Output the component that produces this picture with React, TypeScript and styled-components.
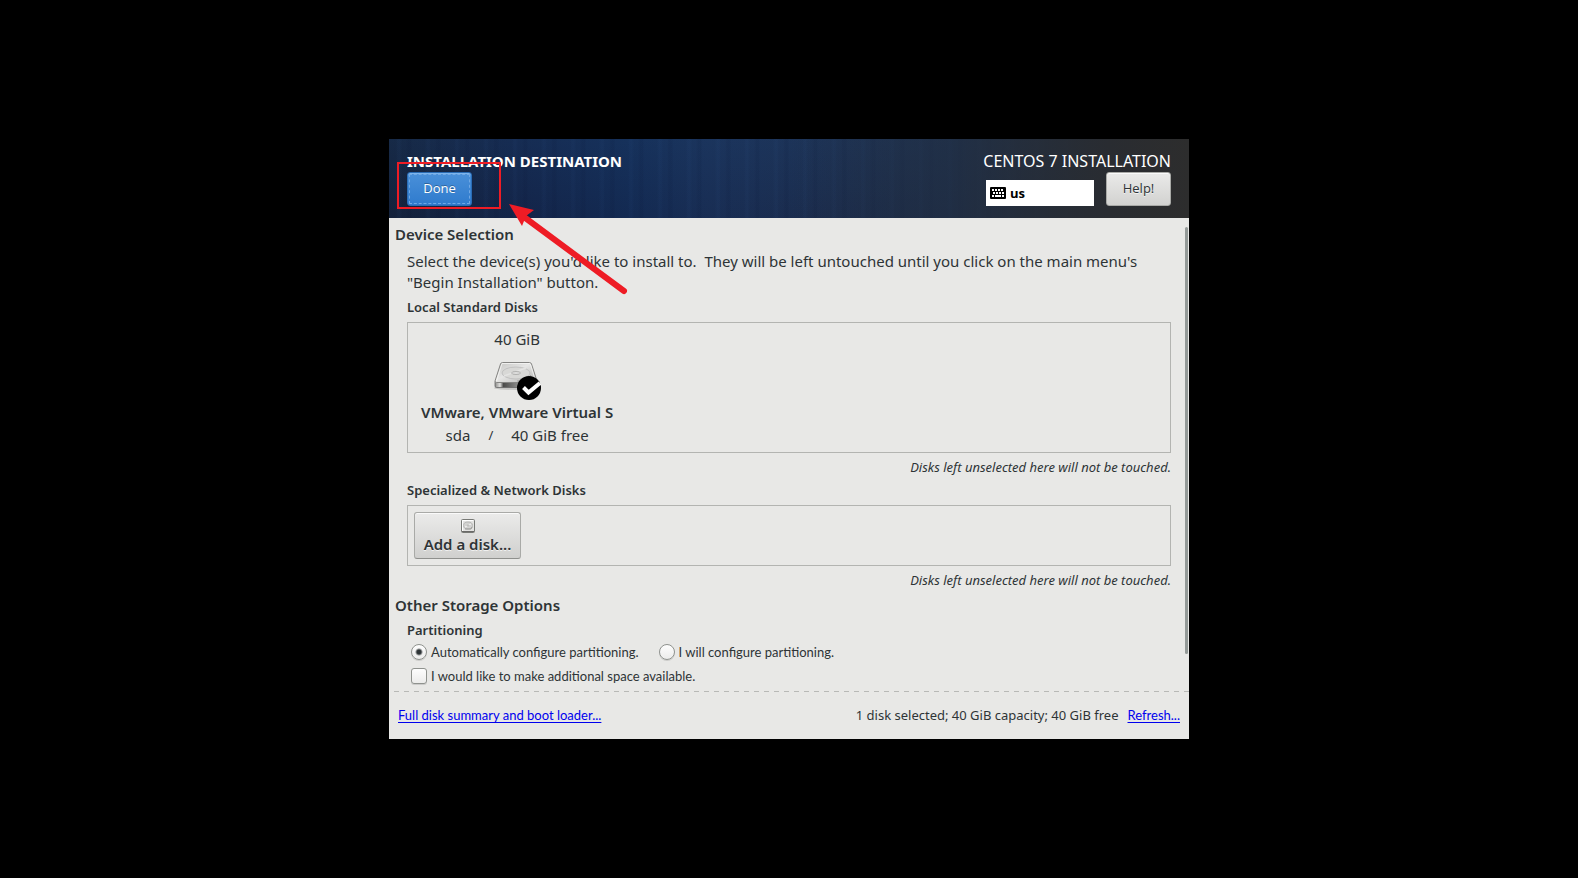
import React from "react";
import styled, { createGlobalStyle } from "styled-components";

const GlobalStyle = createGlobalStyle`
  * { box-sizing: border-box; }
  body {
    margin: 0;
    background: #000;
    color: #2e3436;
    font-family: "Noto Sans", "Open Sans", sans-serif;
    font-size: 13px;
    line-height: 18px;
  }
  button, input { font: inherit; color: inherit; margin: 0; }
  h1, h2, h3, p { margin: 0; }
`;

const controlFont = `"Open Sans", "Noto Sans", sans-serif`;
const labelFont = `Lato, "Open Sans", sans-serif`;

const Screen = styled.div`
  min-height: 100vh;
  display: flex;
  align-items: center;
  justify-content: center;
`;

const Installer = styled.main`
  position: relative;
  width: 100%;
  max-width: 800px;
  background: #e8e8e6;
`;

const Header = styled.header`
  display: flex;
  justify-content: space-between;
  padding: 12px 18px;
  color: #fff;
  background:
    linear-gradient(90deg, transparent 50%, rgba(32, 46, 68, 0.7) 70%, #292c31 90%, #2d2d2d 100%),
    repeating-linear-gradient(90deg, transparent 0 7px, rgba(70, 120, 190, 0.04) 9px 11px, transparent 13px 17px, rgba(0, 10, 40, 0.07) 19px 22px, transparent 23px 29px),
    linear-gradient(180deg, rgba(30, 70, 120, 0.2), rgba(10, 20, 60, 0.1)),
    linear-gradient(90deg, #15233b 0, #14264a 16%, #142c54 30%, #1a3056 40%, #1d2f4f 55%, #222e41 75%, #292c31 90%, #2d2d2d 100%);
`;

const HeaderSide = styled.div<{ $end?: boolean }>`
  display: flex;
  flex-direction: column;
  align-items: ${(p) => (p.$end ? "flex-end" : "flex-start")};
  gap: 1px;
`;

const HeaderTitle = styled.h1`
  font-size: 15px;
  line-height: 20px;
  font-weight: 700;
`;

const ProductName = styled.p`
  font-size: 16px;
  line-height: 20px;
`;

const HeaderControls = styled.div`
  display: flex;
  align-items: flex-end;
  gap: 12px;
`;

const Button = styled.button<{ $primary?: boolean }>`
  width: 65px;
  height: 34px;
  padding: 0 0 2px;
  border-radius: 3px;
  border: 1px solid ${(p) => (p.$primary ? "#2a6cb5" : "#a9aaa7")};
  color: ${(p) => (p.$primary ? "#fff" : "#2e3436")};
  background: ${(p) =>
    p.$primary
      ? "linear-gradient(#4a90d9, #2f7bcd)"
      : "linear-gradient(#eaeae9, #d2d2d0)"};
  font-family: ${controlFont};
  text-shadow: ${(p) =>
    p.$primary ? "0 -1px rgba(0, 0, 0, 0.3)" : "0 1px rgba(255, 255, 255, 0.7)"};
  box-shadow: inset 0 1px ${(p) => (p.$primary ? "#7db4ec" : "#fafafa")};
  outline: ${(p) => (p.$primary ? "1px dashed #70a8e4" : "none")};
  outline-offset: -3px;
`;

const LayoutIndicator = styled.button`
  display: flex;
  align-items: center;
  gap: 4px;
  width: 108px;
  height: 26px;
  padding: 0 4px;
  border: 0;
  background: #fff;
  color: #000;
  font-family: ${controlFont};
  font-weight: 700;
`;

const ScrollArea = styled.div`
  display: flex;
`;

const Content = styled.div`
  flex: 1;
  padding: 6px 0 6px 6px;
`;

const ScrollTrack = styled.div`
  width: 4px;
  margin: 9px 0 0 14px;
`;

const ScrollThumb = styled.div`
  width: 3px;
  height: 92%;
  border-radius: 2px;
  background: #949a98;
`;

const SectionTitle = styled.h2`
  margin-bottom: 6px;
  font-size: 15px;
  line-height: 20px;
  font-weight: 600;
`;

const Section = styled.section`
  padding-left: 12px;
  margin-bottom: 6px;
  &:last-child { margin-bottom: 0; }
`;

const Description = styled.p`
  padding-top: 1px;
  margin-bottom: 5px;
  font-size: 15px;
  line-height: 21px;
  white-space: pre-wrap;
`;

const GroupTitle = styled.h3`
  font-size: 13px;
  line-height: 18px;
  font-weight: 600;
`;

const DiskFrame = styled.div<{ $roomy?: boolean }>`
  display: flex;
  margin: 6px 0 5px;
  padding: ${(p) => (p.$roomy ? "6px 13px 7px" : "6px")};
  border: 1px solid #b3b4b1;
`;

const Note = styled.p`
  text-align: right;
  font-style: italic;
  & + ${GroupTitle} { margin-top: 5px; }
`;

const DiskCard = styled.button`
  display: flex;
  flex-direction: column;
  align-items: center;
  padding: 0;
  border: 0;
  background: none;
  font-size: 15px;
  line-height: 20px;
  svg { margin: 4px 0 1px; }
`;

const DiskName = styled.strong`
  font-weight: 600;
  margin-bottom: 3px;
`;

const DiskFacts = styled.span`
  display: flex;
  gap: 18px;
  small { font-size: 13px; }
`;

const AddDiskButton = styled.button`
  display: flex;
  flex-direction: column;
  align-items: center;
  justify-content: center;
  gap: 1px;
  height: 47px;
  width: 107px;
  padding: 1px 0 0;
  border: 1px solid #a9aaa7;
  border-bottom-color: #8f908d;
  border-radius: 3px;
  background: linear-gradient(#ebebea, #d0d0ce);
  box-shadow: inset 0 1px #fafafa;
  font-size: 15px;
  line-height: 20px;
  font-weight: 600;
  text-shadow: 0 1px rgba(255, 255, 255, 0.7);
`;

const OptionList = styled.div`
  display: flex;
  flex-direction: column;
  gap: 6px;
  margin-top: 4px;
  padding-left: 4px;
`;

const OptionRow = styled.div`
  display: flex;
  gap: 20px;
`;

const Option = styled.label`
  display: flex;
  align-items: center;
  gap: 4px;
  font-family: ${labelFont};
`;

const Choice = styled.input`
  appearance: none;
  width: 16px;
  height: 16px;
  border: 1px solid #8f928e;
  border-radius: ${(p) => (p.type === "radio" ? "50%" : "3px")};
  background: linear-gradient(#fdfdfd, #ececeb);
  box-shadow: 0 1px rgba(0, 0, 0, 0.12);
  &:checked {
    background: radial-gradient(circle, #2e3436 0 2px, transparent 4px), linear-gradient(#fdfdfd, #ececeb);
  }
`;

const Footer = styled.footer`
  display: flex;
  align-items: baseline;
  justify-content: space-between;
  margin-left: 5px;
  padding: 15px 9px 15px 4px;
  background: repeating-linear-gradient(90deg, #b8b9b6 0 5px, transparent 5px 10px) top / 100% 1px no-repeat;
`;

const Summary = styled.div`
  display: flex;
  align-items: baseline;
  gap: 9px;
`;

const Link = styled.a`
  color: #0000ee;
  font-family: ${labelFont};
  text-decoration: underline;
  text-underline-offset: 2px;
`;

const Annotation = styled.svg`
  position: absolute;
  left: 0;
  top: 0;
  pointer-events: none;
`;

const KeyboardIcon = () => (
  <svg width="16" height="12" viewBox="0 0 16 12" aria-hidden="true">
    <rect width="16" height="12" rx="1" fill="#000" />
    <path
      fill="#fff"
      d="M2 2h2v2H2zM5 2h2v2H5zM8 2h2v2H8zM11 2h2v2h-2zM3 5h2v2H3zM6 5h2v2H6zM9 5h2v2H9zM12 5h2v2h-2zM2 8h2v2H2zM5 8h6v2H5zM12 8h2v2h-2z"
    />
  </svg>
);

const HardDiskIcon = () => (
  <svg width="48" height="48" viewBox="0 0 48 48" aria-hidden="true">
    <defs>
      <linearGradient id="lid" x1="0" y1="0" x2="1" y2="1">
        <stop offset="0" stopColor="#c2c2c0" />
        <stop offset="0.45" stopColor="#e6e6e5" />
        <stop offset="1" stopColor="#b0b0ae" />
      </linearGradient>
      <linearGradient id="edge" x1="0" y1="0" x2="1" y2="0">
        <stop offset="0" stopColor="#8a8a88" />
        <stop offset="0.12" stopColor="#e0e0de" />
        <stop offset="0.2" stopColor="#4a4a49" />
        <stop offset="0.65" stopColor="#a0a09e" />
        <stop offset="1" stopColor="#5a5a59" />
      </linearGradient>
    </defs>
    <ellipse cx="23" cy="35" rx="22" ry="2" fill="#000" opacity="0.15" />
    <path d="M2 28.500V33q0 1.500 1.500 1.500h39Q44 34.500 44 33v-4.500z" fill="url(#edge)" stroke="#666" strokeWidth="0.800" />
    <path d="M9.500 9.500h27q1.500 0 2 1.500L44 28q0 1.500-1.500 1.500h-39Q2 29.500 2 28L7.500 11Q8 9.500 9.500 9.500z" fill="url(#lid)" stroke="#858583" strokeWidth="1" />
    <path d="M3.500 28L9 10.500h27.500l1 1 5 16.500" fill="none" stroke="#f6f6f5" strokeWidth="0.800" />
    <ellipse cx="23" cy="20" rx="14" ry="6" fill="#d8d8d6" stroke="#bababa" strokeWidth="0.800" />
    <path d="M11 23L33 15" stroke="#e4e4e3" strokeWidth="1.500" />
    <ellipse cx="23" cy="20" rx="4.500" ry="1.500" fill="#dededd" stroke="#a5a5a3" strokeWidth="0.800" />
    <path d="M38 22q-3 5-14 6" fill="none" stroke="#a5a5a3" strokeWidth="1" />
    <circle cx="36" cy="35" r="12" fill="#000" />
    <path d="M30.500 34.500l5 5L47 30" fill="none" stroke="#fff" strokeWidth="4" />
  </svg>
);

const SmallDiskIcon = () => (
  <svg width="14" height="14" viewBox="0 0 14 14" aria-hidden="true">
    <rect x="0.500" y="0.500" width="13" height="13" rx="1" fill="#e4e4e2" stroke="#777975" />
    <path d="M1.500 12V1.500H12" fill="none" stroke="#fff" />
    <path d="M1 12.500h12" stroke="#6a6a68" />
    <ellipse cx="7" cy="6.500" rx="4.500" ry="3.500" fill="#d3d3d1" stroke="#b8b8b6" />
    <path d="M4 8l6-3" stroke="#f5f5f5" />
    <path d="M4 10h6l1-2" fill="none" stroke="#9c9c9a" />
    <ellipse cx="7" cy="6.500" rx="1.500" ry="1" fill="#c0c0be" />
  </svg>
);

export default function App() {
  return (
    <>
      <GlobalStyle />
      <Screen>
        <Installer>
          <Header>
            <HeaderSide>
              <HeaderTitle>INSTALLATION DESTINATION</HeaderTitle>
              <Button $primary>Done</Button>
            </HeaderSide>
            <HeaderSide $end>
              <ProductName>CENTOS 7 INSTALLATION</ProductName>
              <HeaderControls>
                <LayoutIndicator aria-label="Keyboard layout: us">
                  <KeyboardIcon />
                  us
                </LayoutIndicator>
                <Button>Help!</Button>
              </HeaderControls>
            </HeaderSide>
          </Header>

          <ScrollArea>
            <Content>
              <SectionTitle>Device Selection</SectionTitle>
              <Section>
                <Description>
                  {"Select the device(s) you'd like to install to.  They will be left untouched until you click on the main menu's \"Begin Installation\" button."}
                </Description>
                <GroupTitle>Local Standard Disks</GroupTitle>
                <DiskFrame $roomy>
                  <DiskCard aria-pressed="true">
                    <span>40 GiB</span>
                    <HardDiskIcon />
                    <DiskName>VMware, VMware Virtual S</DiskName>
                    <DiskFacts>
                      <span>sda</span>
                      <small>/</small>
                      <span>40 GiB free</span>
                    </DiskFacts>
                  </DiskCard>
                </DiskFrame>
                <Note>Disks left unselected here will not be touched.</Note>
                <GroupTitle>Specialized &amp; Network Disks</GroupTitle>
                <DiskFrame>
                  <AddDiskButton>
                    <SmallDiskIcon />
                    Add a disk...
                  </AddDiskButton>
                </DiskFrame>
                <Note>Disks left unselected here will not be touched.</Note>
              </Section>
              <SectionTitle>Other Storage Options</SectionTitle>
              <Section>
                <GroupTitle>Partitioning</GroupTitle>
                <OptionList>
                  <OptionRow>
                    <Option>
                      <Choice type="radio" name="partitioning" defaultChecked />
                      Automatically configure partitioning.
                    </Option>
                    <Option>
                      <Choice type="radio" name="partitioning" />
                      I will configure partitioning.
                    </Option>
                  </OptionRow>
                  <OptionRow>
                    <Option>
                      <Choice type="checkbox" />
                      I would like to make additional space available.
                    </Option>
                  </OptionRow>
                </OptionList>
              </Section>
            </Content>
            <ScrollTrack>
              <ScrollThumb />
            </ScrollTrack>
          </ScrollArea>

          <Footer>
            <Link href="#summary">Full disk summary and boot loader...</Link>
            <Summary>
              <span>1 disk selected; 40 GiB capacity; 40 GiB free</span>
              <Link href="#refresh">Refresh...</Link>
            </Summary>
          </Footer>

          <Annotation width="260" height="170" viewBox="0 0 260 170" aria-hidden="true">
            <rect x="9" y="24" width="102" height="45" fill="none" stroke="#ee1c25" strokeWidth="2" />
            <path d="M135 78L235 152" stroke="#ee1c25" strokeWidth="6" strokeLinecap="round" />
            <path d="M120 65L145 71L137 77L133 87Z" fill="#ee1c25" />
          </Annotation>
        </Installer>
      </Screen>
    </>
  );
}
